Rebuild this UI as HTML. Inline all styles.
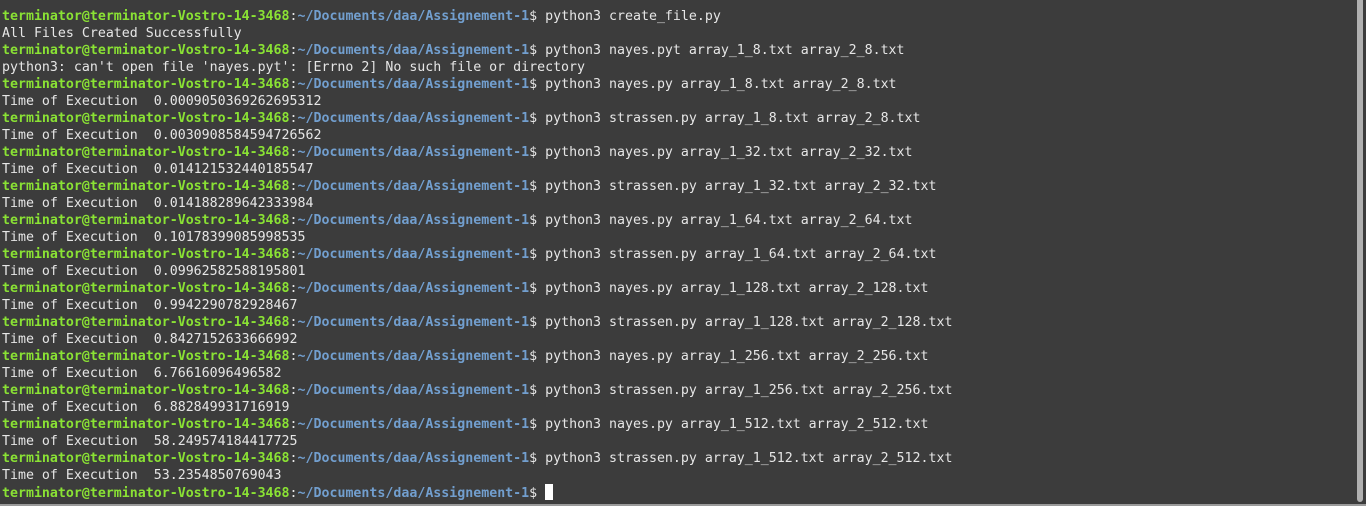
<!DOCTYPE html><html><head><style>
html,body{margin:0;padding:0;background:#3c3c3c;width:1366px;height:506px;overflow:hidden}
pre{margin:0;position:absolute;left:2px;top:8px;font-family:"DejaVu Sans Mono","Liberation Mono",monospace;font-size:13.27px;line-height:17px;color:#e6e6e6;letter-spacing:0}
.g{color:#8ae234;font-weight:bold}.b{color:#729fcf;font-weight:bold}
.c{display:inline-block;width:8px;height:16px;background:#fff;vertical-align:-3px}
.sb{position:absolute;left:1357px;top:0;width:6px;height:502px;background:#b0b0b0;border-radius:0 0 3px 3px}
.bt{position:absolute;left:0;top:504px;width:1366px;height:2px;background:#9a9a9a}
</style></head><body><pre><span class="g">terminator@terminator-Vostro-14-3468</span>:<span class="b">~/Documents/daa/Assignement-1</span>$ python3 create_file.py
All Files Created Successfully
<span class="g">terminator@terminator-Vostro-14-3468</span>:<span class="b">~/Documents/daa/Assignement-1</span>$ python3 nayes.pyt array_1_8.txt array_2_8.txt
python3: can't open file 'nayes.pyt': [Errno 2] No such file or directory
<span class="g">terminator@terminator-Vostro-14-3468</span>:<span class="b">~/Documents/daa/Assignement-1</span>$ python3 nayes.py array_1_8.txt array_2_8.txt
Time of Execution  0.0009050369262695312
<span class="g">terminator@terminator-Vostro-14-3468</span>:<span class="b">~/Documents/daa/Assignement-1</span>$ python3 strassen.py array_1_8.txt array_2_8.txt
Time of Execution  0.0030908584594726562
<span class="g">terminator@terminator-Vostro-14-3468</span>:<span class="b">~/Documents/daa/Assignement-1</span>$ python3 nayes.py array_1_32.txt array_2_32.txt
Time of Execution  0.014121532440185547
<span class="g">terminator@terminator-Vostro-14-3468</span>:<span class="b">~/Documents/daa/Assignement-1</span>$ python3 strassen.py array_1_32.txt array_2_32.txt
Time of Execution  0.014188289642333984
<span class="g">terminator@terminator-Vostro-14-3468</span>:<span class="b">~/Documents/daa/Assignement-1</span>$ python3 nayes.py array_1_64.txt array_2_64.txt
Time of Execution  0.10178399085998535
<span class="g">terminator@terminator-Vostro-14-3468</span>:<span class="b">~/Documents/daa/Assignement-1</span>$ python3 strassen.py array_1_64.txt array_2_64.txt
Time of Execution  0.09962582588195801
<span class="g">terminator@terminator-Vostro-14-3468</span>:<span class="b">~/Documents/daa/Assignement-1</span>$ python3 nayes.py array_1_128.txt array_2_128.txt
Time of Execution  0.9942290782928467
<span class="g">terminator@terminator-Vostro-14-3468</span>:<span class="b">~/Documents/daa/Assignement-1</span>$ python3 strassen.py array_1_128.txt array_2_128.txt
Time of Execution  0.8427152633666992
<span class="g">terminator@terminator-Vostro-14-3468</span>:<span class="b">~/Documents/daa/Assignement-1</span>$ python3 nayes.py array_1_256.txt array_2_256.txt
Time of Execution  6.76616096496582
<span class="g">terminator@terminator-Vostro-14-3468</span>:<span class="b">~/Documents/daa/Assignement-1</span>$ python3 strassen.py array_1_256.txt array_2_256.txt
Time of Execution  6.882849931716919
<span class="g">terminator@terminator-Vostro-14-3468</span>:<span class="b">~/Documents/daa/Assignement-1</span>$ python3 nayes.py array_1_512.txt array_2_512.txt
Time of Execution  58.249574184417725
<span class="g">terminator@terminator-Vostro-14-3468</span>:<span class="b">~/Documents/daa/Assignement-1</span>$ python3 strassen.py array_1_512.txt array_2_512.txt
Time of Execution  53.2354850769043
<span class="g">terminator@terminator-Vostro-14-3468</span>:<span class="b">~/Documents/daa/Assignement-1</span>$ <span class="c"></span></pre>
<div class="sb"></div><div class="bt"></div>
</body></html>
